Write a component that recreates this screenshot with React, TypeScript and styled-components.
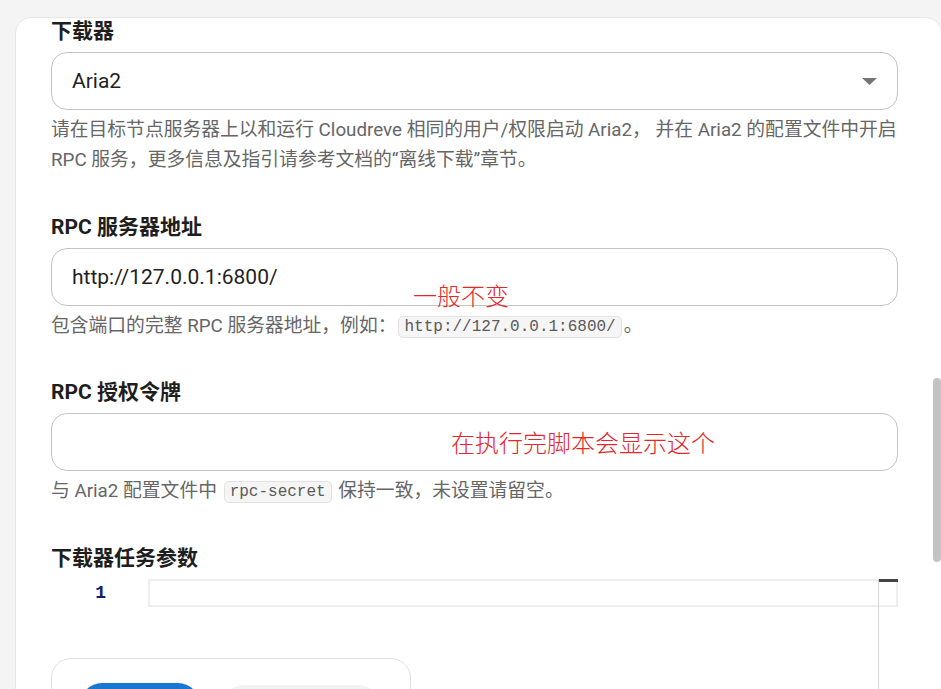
import React from "react";
import styled, { createGlobalStyle } from "styled-components";

const Global = createGlobalStyle`
  html, body {
    margin: 0;
    padding: 0;
    background: #f4f4f4;
    overflow: hidden;
    height: 100%;
  }
  * { box-sizing: border-box; }
  body {
    font-family: "Roboto", "Noto Sans CJK SC", sans-serif;
  }
`;

const Page = styled.div`
  padding: 17px 0 0 15px;
  height: 689px;
  overflow: hidden;
`;

const Card = styled.div`
  width: 927px;
  min-height: 900px;
  background: #fff;
  border: 1px solid #e6e6e6;
  border-radius: 16px;
  padding: 0 0 0 35px;
`;

const Content = styled.div`
  width: 847px;
  display: flex;
  flex-direction: column;
`;

const Section = styled.section<{ $first?: boolean }>`
  position: relative;
  display: flex;
  flex-direction: column;
  margin-top: ${(p) => (p.$first ? "0" : "38.5px")};
`;

const Title = styled.h6`
  margin: 0 0 8px 0;
  font-family: "Roboto", "Noto Sans CJK SC", sans-serif;
  font-weight: 700;
  font-size: 21px;
  line-height: 26px;
  color: #1e1e1e;
`;

const Field = styled.div`
  position: relative;
  height: 58px;
  border: 1px solid #c4c4c4;
  border-radius: 16px;
  display: flex;
  align-items: center;
  justify-content: space-between;
  padding: 0 20px 0 20px;
  font-family: "Roboto", "Noto Sans CJK SC", sans-serif;
  font-size: 21px;
  color: #1f1f1f;
`;

const Helper = styled.p`
  margin: 5px 0 0 0;
  font-family: "Roboto", "Noto Sans CJK SC", sans-serif;
  font-size: 18.8px;
  line-height: 30px;
  color: #666;
`;

const Code = styled.code`
  display: inline-block;
  font-family: "Liberation Mono", "Noto Sans CJK SC", monospace;
  font-size: 16px;
  line-height: 20px;
  padding: 0 5px;
  margin: 0 2px;
  color: #5a5a5a;
  background: #f5f5f5;
  border: 1px solid #e2e2e2;
  border-radius: 5px;
  vertical-align: 1px;
`;

const Note = styled.span`
  position: absolute;
  font-family: "Noto Sans CJK SC", sans-serif;
  font-weight: 300;
  font-size: 24px;
  line-height: 1;
  color: #e5262b;
  white-space: nowrap;
`;

const Editor = styled.div`
  position: relative;
  display: flex;
  height: 200px;
  margin-top: 0.5px;
`;

const Gutter = styled.div`
  width: 97px;
  display: flex;
  justify-content: flex-end;
  padding-right: 42px;
  font-family: "Liberation Mono", monospace;
  font-weight: 700;
  font-size: 18px;
  line-height: 28px;
  color: #0b216f;
`;

const LineArea = styled.div`
  flex: 1;
  position: relative;
`;

const CurrentLine = styled.div`
  height: 28px;
  border: 2px solid #eeeeee;
`;

const Ruler = styled.div`
  position: absolute;
  top: 0;
  right: 0;
  width: 20px;
  height: 100%;
  border-left: 1px solid #d6d6d6;
  &::before {
    content: "";
    position: absolute;
    top: 0;
    left: 0;
    right: 0;
    height: 3px;
    background: #444;
  }
`;

const SaveBar = styled.div`
  position: fixed;
  left: 51px;
  top: 658px;
  width: 360px;
  height: 110px;
  background: #fff;
  border: 1px solid #e0e0e0;
  border-radius: 20px;
  display: flex;
  align-items: flex-start;
  gap: 22px;
  padding: 24px 0 0 28px;
`;

const Button = styled.button<{ $primary?: boolean }>`
  border: none;
  height: 44px;
  width: ${(p) => (p.$primary ? "120px" : "158px")};
  margin-top: ${(p) => (p.$primary ? "0" : "2px")};
  border-radius: 22px;
  background: ${(p) => (p.$primary ? "#1976d2" : "#f1f1f1")};
`;

const Thumb = styled.div`
  position: fixed;
  right: 0;
  top: 378px;
  width: 8px;
  height: 184px;
  border-radius: 4px;
  background: #c3c3c3;
`;

const DropIcon = () => (
  <svg width="15" height="7" viewBox="0 0 15 7" aria-hidden="true">
    <polygon points="0,0 15,0 7.5,7" fill="#757575" />
  </svg>
);

export default function App() {
  return (
    <>
      <Global />
      <Page>
        <Card>
          <Content>
            <Section $first>
              <Title>下载器</Title>
              <Field>
                <span>Aria2</span>
                <DropIcon />
              </Field>
              <Helper>
                请在目标节点服务器上以和运行 Cloudreve 相同的用户/权限启动 Aria2， 并在 Aria2 的配置文件中开启 RPC 服务，更多信息及指引请参考文档的“离线下载”章节。
              </Helper>
            </Section>

            <Section>
              <Title>RPC 服务器地址</Title>
              <Field>
                <span>http://127.0.0.1:6800/</span>
              </Field>
              <Helper>
                包含端口的完整 RPC 服务器地址，例如：<Code>http://127.0.0.1:6800/</Code>。
              </Helper>
              <Note style={{ left: 362, top: 69 }}>一般不变</Note>
            </Section>

            <Section>
              <Title>RPC 授权令牌</Title>
              <Field>
                <Note style={{ left: 399, top: 16 }}>在执行完脚本会显示这个</Note>
              </Field>
              <Helper>
                与 Aria2 配置文件中 <Code>rpc-secret</Code> 保持一致，未设置请留空。
              </Helper>
            </Section>

            <Section>
              <Title>下载器任务参数</Title>
              <Editor>
                <Gutter>1</Gutter>
                <LineArea>
                  <CurrentLine />
                  <Ruler />
                </LineArea>
              </Editor>
            </Section>
          </Content>
        </Card>
      </Page>
      <SaveBar>
        <Button $primary aria-label="保存" />
        <Button aria-label="取消" />
      </SaveBar>
      <Thumb />
    </>
  );
}
